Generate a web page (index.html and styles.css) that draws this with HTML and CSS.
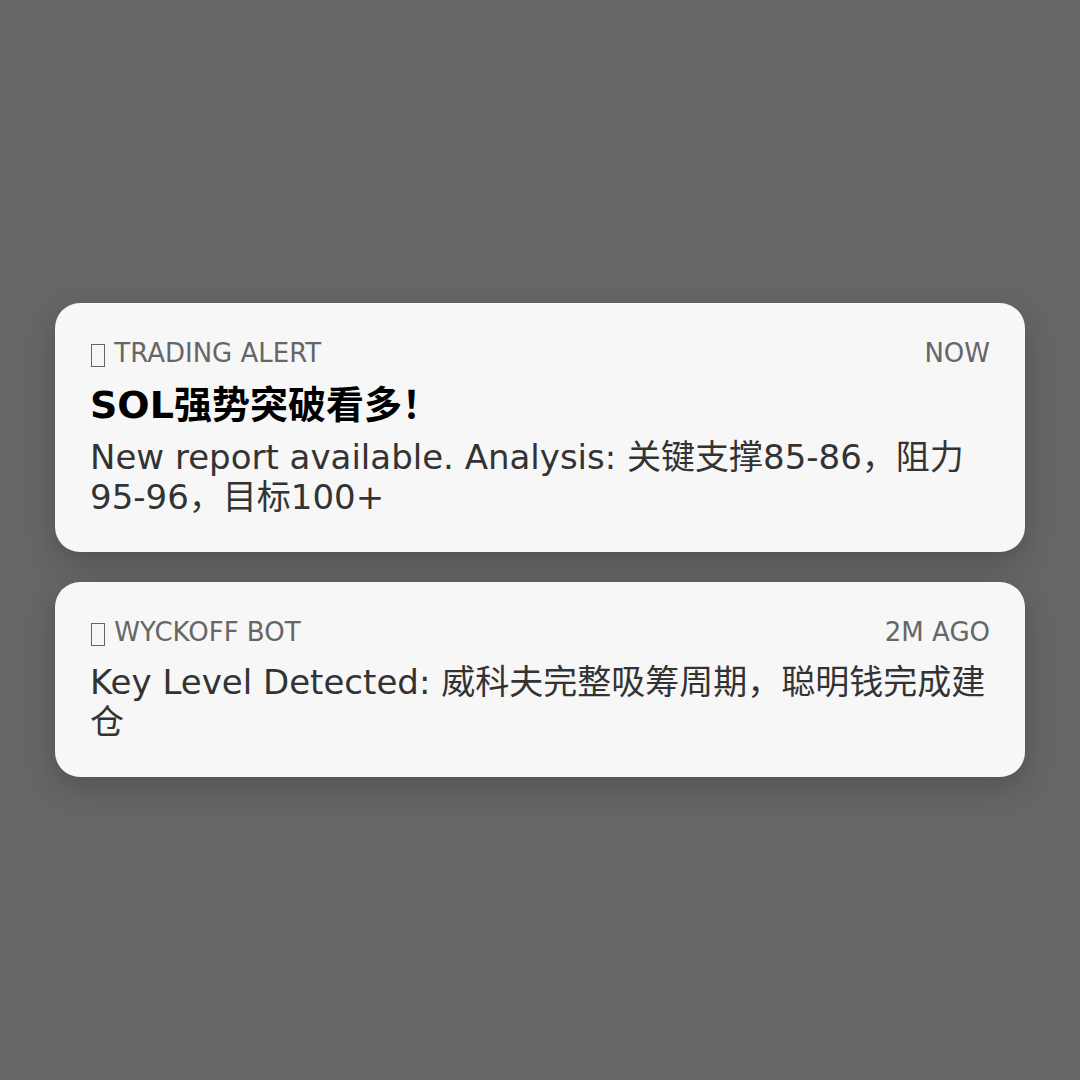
FILE: index.html
```html
<!DOCTYPE html>
<html lang="zh">

<head>
	<meta charset="UTF-8">
	<title>Trading alerts</title>
	<link rel="stylesheet" href="styles.css">
</head>

<body>
	<div class="notifications">
		<div class="notification">
			<div class="header">
				<span><span class="icon"></span> Trading Alert</span>
				<span>now</span>
			</div>
			<div class="title">SOL强势突破看多！</div>
			<div class="message">New report available. Analysis: 关键支撑85-86，阻力95-96，目标100+</div>
		</div>

		<div class="notification">
			<div class="header">
				<span><span class="icon"></span> Wyckoff Bot</span>
				<span>2m ago</span>
			</div>
			<div class="message">Key Level Detected: 威科夫完整吸筹周期，聪明钱完成建仓</div>
		</div>
	</div>
</body>

</html>
```
FILE: styles.css
```css
* {
	box-sizing: border-box;
}

body {
	margin: 0;
	padding: 0 55px;
	min-height: 100vh;
	display: flex;
	align-items: center;
	justify-content: center;
	background: #666;
	font-family: "DejaVu Sans", "Noto Sans CJK SC", sans-serif;
}

.notifications {
	width: 100%;
	display: flex;
	flex-direction: column;
	gap: 30px;
}

.notification {
	background: #f7f7f7;
	border-radius: 25px;
	padding: 35px;
	box-shadow: 0 10px 30px rgba(0, 0, 0, 0.2);
}

.header {
	display: flex;
	justify-content: space-between;
	margin-bottom: 15px;
	font-size: 26px;
	line-height: 30px;
	color: #666;
	text-transform: uppercase;
}

.icon {
	display: inline-block;
	width: 14px;
	height: 23px;
	margin: 0 1px;
	border: 1px solid #666;
	vertical-align: -5px;
}

.title {
	margin-bottom: 10px;
	font-size: 38px;
	line-height: 44px;
	font-weight: bold;
	color: #000;
}

.message {
	font-size: 34px;
	line-height: 40px;
	color: #333;
}
```
